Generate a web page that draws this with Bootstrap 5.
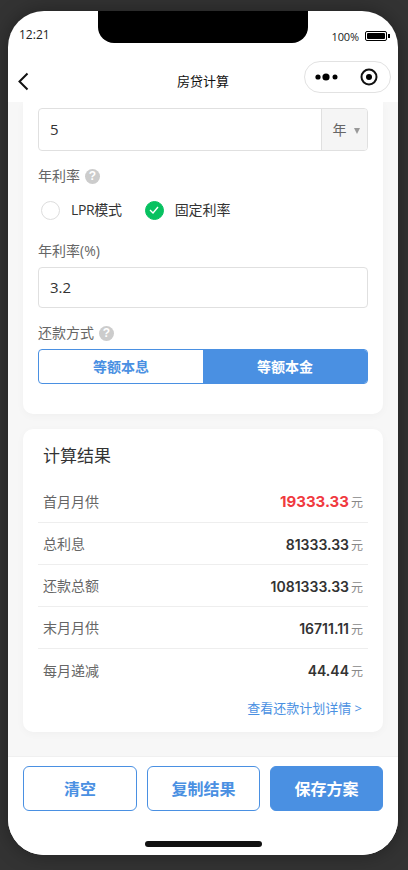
<!DOCTYPE html>
<html lang="zh"><head><meta charset="utf-8">
<link rel="stylesheet" href="https://cdn.jsdelivr.net/npm/bootstrap@5.3.0/dist/css/bootstrap.min.css">
<style>
html,body{height:100%;margin:0;background:#333;overflow:hidden}
body{font-family:"Open Sans","Noto Sans CJK SC",sans-serif;color:#333}
.phone{width:390px;height:844px;margin:11px 8px 0;background:#fff;border-radius:36px;overflow:hidden;box-shadow:0 0 20px rgba(0,0,0,.35)}
.statusbar{height:49px;padding:0 8px 0 11px}
.notch{left:90px;top:0;width:210px;height:32px;background:#000;border-radius:0 0 16px 16px}
.clock{font-size:12px;margin-top:15px;line-height:17px;color:#222}
.batt-txt{font-size:11px;line-height:15px;margin-top:18px;color:#222;letter-spacing:-.1px}
.batt{width:22px;height:10px;border:1px solid #000;border-radius:2px;padding:1px;margin:20px 1px 0 6px}
.batt i{display:block;height:100%;background:#000;border-radius:1px}
.batt-tip{width:2px;height:4px;background:#000;margin-top:23px}
.navline{height:42px;padding:0 7px 0 9px}
.nav-title{left:0;right:0;top:0;height:42px;line-height:42px;text-align:center;font-size:13px;color:#111}
.back-ic{margin-top:12px;z-index:1}
.capsule{width:87px;height:32px;border:1px solid #e2e2e2;border-radius:16px;padding:0 12px 0 10px;margin-top:1px;background:#fff;z-index:1}
.mainarea{background:#f7f7f7;padding:0 15px;height:654px;overflow:hidden}
.panel{background:#fff;border-radius:10px;box-shadow:0 2px 8px rgba(0,0,0,.03)}
.panel-a{padding:6px 15px 30px;border-radius:0 0 10px 10px;margin-bottom:15px}
.field{border:1px solid #e0e0e0;border-radius:4px;height:43px;background:#fff;font-size:15px;color:#333;padding-left:11px;overflow:hidden}
.field-b{height:41px;margin-top:6px}
.unit{width:46px;height:100%;background:#f5f5f5;border-left:1px solid #e0e0e0;color:#666;font-size:14px;gap:7px;padding-left:3px}
.caret{width:0;height:0;border-left:3.500px solid transparent;border-right:3.500px solid transparent;border-top:6px solid #999;margin-top:2px}
.lbl{font-size:14px;line-height:20px;color:#666}
.lbl-rate{margin-top:15px;gap:5px}
.lbl-pct{margin-top:21px}
.lbl-way{margin-top:15px;gap:5px}
.help{width:15px;height:15px;border-radius:50%;background:#ccc;color:#fff;font-size:12px;font-weight:700;line-height:15px;text-align:center;font-family:"Liberation Sans",sans-serif}
.opts{margin-top:14px}
.radio{width:19px;height:19px;border-radius:50%;border:1px solid #ddd;background:#fff;margin-left:3px}
.radio.on{background:#07c160;border-color:#07c160;margin-left:23px}
.opt{font-size:14px;line-height:20px;color:#333;margin-left:11px}
.opt-lpr{letter-spacing:-.35px}
.seg{height:35px;border:1px solid #4a90e2;border-radius:4px;overflow:hidden;font-size:14px;font-weight:700;color:#4a90e2;margin-top:6px}
.seg .on{background:#4a90e2;color:#fff}
.panel-b{padding:15px 15px 0;height:303px}
.res-title{font-size:17px;line-height:24px;color:#333;padding-left:5px;margin-bottom:13px}
.res-row{height:42px;border-bottom:1px solid #eee;padding:0 5px;font-size:14px;color:#666}
.res-row.last{border-bottom:0}
.amt{font-family:Inter,"Noto Sans CJK SC",sans-serif;font-size:14px;font-weight:600;color:#333;padding-top:1px}
.amt.hot{font-size:15px;font-weight:700;color:#f03a3f}
.yuan{font-family:"Noto Sans CJK SC",sans-serif;font-size:12px;color:#888;margin-left:2px;font-weight:400}
.detail{font-size:13px;line-height:18px;color:#4a90e2;text-align:right;padding-right:6px;margin-top:8px}
.footbar{height:99px;background:#fff;padding:9px 15px 0;gap:10px;border-top:1px solid #f0f0f0}
.fbtn{height:45px;border:1px solid #4a90e2;border-radius:6px;color:#4a90e2;font-size:16px;font-weight:700;background:#fff;padding:0;flex:1 1 0}
.fbtn.first{flex:0 0 114px}
.fbtn.solid{background:#4a90e2;color:#fff}
.homebar{width:117px;height:6px;background:#111;border-radius:3px;left:137px;bottom:8px}
</style></head><body>
<div class="phone position-relative d-flex flex-column">
  <div class="position-absolute notch"></div>
  <div class="statusbar d-flex justify-content-between">
    <div class="clock">12:21</div>
    <div class="d-flex align-items-start"><span class="batt-txt">100%</span><span class="batt"><i></i></span><span class="batt-tip"></span></div>
  </div>
  <div class="navline position-relative d-flex justify-content-between align-items-start">
    <svg width="12" height="20" viewBox="0 0 12 20" class="back-ic"><path d="M10.500 1.500 2.500 9.500l8 8" fill="none" stroke="#111" stroke-width="2"/></svg>
    <div class="position-absolute nav-title">房贷计算</div>
    <div class="capsule d-flex justify-content-between align-items-center">
      <svg width="23" height="8" viewBox="0 0 23 8"><circle cx="3" cy="4" r="2.600"/><circle cx="11" cy="4" r="3.600"/><circle cx="20" cy="4" r="2.500"/></svg>
      <svg width="18" height="18" viewBox="0 0 18 18"><circle cx="9" cy="9" r="7.500" fill="none" stroke="#111" stroke-width="2"/><circle cx="9" cy="9" r="3"/></svg>
    </div>
  </div>
  <div class="mainarea flex-grow-1">
    <div class="panel panel-a">
      <div class="field d-flex justify-content-between align-items-center"><span>5</span><span class="unit d-flex align-items-center justify-content-center">年<i class="caret"></i></span></div>
      <div class="lbl lbl-rate d-flex align-items-center">年利率<span class="help">?</span></div>
      <div class="opts d-flex align-items-center">
        <span class="radio"></span><span class="opt opt-lpr">LPR模式</span>
        <span class="radio on d-flex align-items-center justify-content-center"><svg width="10" height="8" viewBox="0 0 10 8"><path d="M1 4l3 3 5-6" fill="none" stroke="#fff" stroke-width="1.400"/></svg></span><span class="opt">固定利率</span>
      </div>
      <div class="lbl lbl-pct">年利率(%)</div>
      <div class="field field-b d-flex align-items-center">3.2</div>
      <div class="lbl lbl-way d-flex align-items-center">还款方式<span class="help">?</span></div>
      <div class="seg d-flex">
        <div class="w-50 d-flex align-items-center justify-content-center">等额本息</div>
        <div class="w-50 on d-flex align-items-center justify-content-center">等额本金</div>
      </div>
    </div>
    <div class="panel panel-b">
      <div class="res-title">计算结果</div>
      <div class="res-row d-flex justify-content-between align-items-center"><span>首月月供</span><span class="amt hot">19333.33<span class="yuan">元</span></span></div>
      <div class="res-row d-flex justify-content-between align-items-center"><span>总利息</span><span class="amt">81333.33<span class="yuan">元</span></span></div>
      <div class="res-row d-flex justify-content-between align-items-center"><span>还款总额</span><span class="amt">1081333.33<span class="yuan">元</span></span></div>
      <div class="res-row d-flex justify-content-between align-items-center"><span>末月月供</span><span class="amt">16711.11<span class="yuan">元</span></span></div>
      <div class="res-row last d-flex justify-content-between align-items-center"><span>每月递减</span><span class="amt">44.44<span class="yuan">元</span></span></div>
      <div class="detail">查看还款计划详情 &gt;</div>
    </div>
  </div>
  <div class="footbar d-flex align-items-start">
    <button class="fbtn first">清空</button><button class="fbtn">复制结果</button><button class="fbtn solid">保存方案</button>
  </div>
  <div class="position-absolute homebar"></div>
</div>
<script src="https://cdn.jsdelivr.net/npm/bootstrap@5.3.0/dist/js/bootstrap.bundle.min.js"></script>
</body></html>
